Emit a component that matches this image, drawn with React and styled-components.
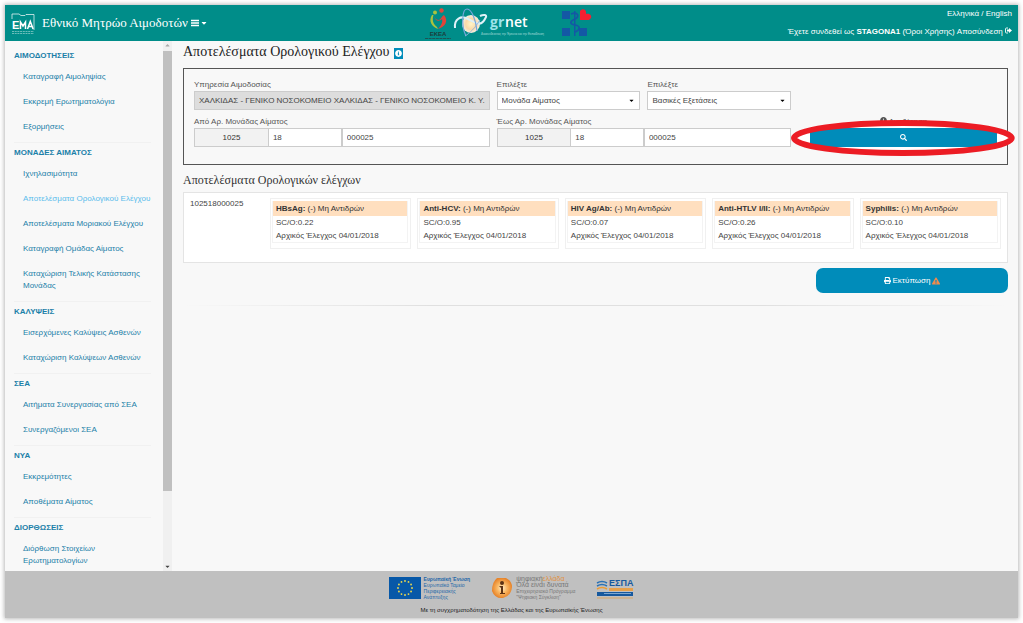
import React from "react";
import styled, { createGlobalStyle } from "styled-components";
import { FaCaretDown, FaSearch, FaPrint, FaExclamationTriangle, FaInfoCircle } from "react-icons/fa";

const serif = '"Liberation Serif", "Times New Roman", serif';
const teal = "#008d89";
const blue = "#008cba";

const Global = createGlobalStyle`
  * { box-sizing: border-box; }
  body {
    margin: 0;
    background: #fff;
    color: #444;
    font-family: "Liberation Sans", Arial, sans-serif;
    font-size: 8px;
    line-height: 12px;
  }
  a { color: inherit; text-decoration: none; }
  h1, h2, h3, p, ul { margin: 0; padding: 0; }
  ul { list-style: none; }
  input, select, button { font: inherit; color: inherit; min-width: 0; }
`;

const Page = styled.div`
  min-height: 100vh;
  padding: 5px;
  display: flex;
`;
const Shell = styled.div`
  flex: 1;
  min-width: 0;
  display: flex;
  flex-direction: column;
  background: #f8f8f8;
  box-shadow: 0 0 4px 1px #bbb;
`;

/* Header */
const Header = styled.header`
  display: grid;
  grid-template-columns: 1fr auto 1fr;
  align-items: center;
  height: 36px;
  padding: 0 6px;
  background: ${teal};
  color: #fff;
`;
const Brand = styled.div`
  display: flex;
  align-items: center;
  gap: 7px;
`;
const BrandTitle = styled.a`
  font: 13px/18px ${serif};
`;
const MenuButton = styled.button`
  display: flex;
  align-items: center;
  gap: 1px;
  margin-left: -4px;
  padding: 0;
  border: 0;
  background: none;
`;
const Logos = styled.div`
  display: flex;
  align-items: center;
  margin-right: 6px;
`;
const Account = styled.div`
  display: flex;
  flex-direction: column;
  align-items: flex-end;
  gap: 6px;
  white-space: nowrap;
`;

/* Body */
const Body = styled.div`
  flex: 1;
  display: grid;
  grid-template-columns: 158px 9px minmax(0, 1fr);
`;
const Nav = styled.nav`
  padding: 9px 12px 0 9px;
  color: #1b80a8;
`;
const Group = styled.section`
  & + & {
    border-top: 1px solid #f1f1f1;
    margin-top: 3px;
    padding-top: 4px;
  }
  &:last-child li { padding-bottom: 3px; }
`;
const GroupTitle = styled.h3`
  font-size: 8px;
  line-height: 12px;
  padding-bottom: 2px;
`;
const NavItem = styled.li`
  padding: 7px 0 6px 9px;
  color: ${(p) => (p.$active ? "#5bbdec" : "inherit")};
`;
const ScrollTrack = styled.div`
  display: flex;
  flex-direction: column;
  align-items: center;
  background: #f0f0f0;
`;
const ScrollArrow = styled.span`
  display: flex;
  align-items: center;
  justify-content: center;
  height: 10px;
  color: ${(p) => (p.$dim ? "#aaa" : "#444")};
  transform: ${(p) => (p.$up ? "rotate(180deg)" : "none")};
`;
const ScrollThumb = styled.span`
  flex: 44;
  width: 100%;
  background: #c0c0c0;
`;
const ScrollRest = styled.span`
  flex: 7;
`;
const Main = styled.main`
  padding: 1px 10px 20px 11px;
`;
const PageTitle = styled.h1`
  display: flex;
  align-items: center;
  gap: 5px;
  font: 14px/19px ${serif};
  color: #222;
`;
const InfoBadge = styled.span`
  display: flex;
  align-items: center;
  justify-content: center;
  width: 9px;
  height: 11px;
  margin-top: 3px;
  background: ${blue};
  color: #fff;
`;
const SearchForm = styled.form`
  display: grid;
  grid-template-columns: 296fr 144fr 144fr 200fr;
  gap: 6px 7px;
  margin-top: 7px;
  padding: 10px 9px 17px 10px;
  border: 1px solid #555;
`;
const Field = styled.div`
  display: flex;
  flex-direction: column;
  min-width: 0;
  grid-column: span ${(p) => p.$span || 1};
`;
const Label = styled.label`
  line-height: 12px;
  color: #555;
`;
const control = `
  width: 100%;
  height: 19px;
  border: 1px solid #ccc;
  border-radius: 0;
  outline: 0;
`;
const TextInput = styled.input`
  ${control}
  padding: 0 4px;
  background: ${(p) => (p.disabled ? "#ddd" : "#fff")};
  color: #444;
`;
const SelectBox = styled.div`
  display: grid;
  align-items: center;
  & > * { grid-area: 1 / 1; }
  & > svg {
    justify-self: end;
    margin-right: 5px;
    color: #000;
    pointer-events: none;
  }
`;
const Select = styled.select`
  ${control}
  appearance: none;
  padding: 0 4px;
  background: #fff;
`;
const UnitRow = styled.div`
  display: grid;
  grid-template-columns: 1fr 1fr 2fr;
`;
const Prefix = styled.span`
  display: flex;
  align-items: center;
  justify-content: center;
  border: 1px solid #ccc;
  border-right: 0;
  background: #f2f2f2;
  color: #333;
`;
const SearchField = styled(Field)`
  position: relative;
  isolation: isolate;
  padding: 0 1px 0 12px;
  text-align: center;
`;
const SearchButton = styled.button`
  display: flex;
  align-items: center;
  justify-content: center;
  height: 19px;
  border: 0;
  background: ${blue};
  color: #fff;
`;
const Highlight = styled.svg`
  position: absolute;
  left: -8px;
  top: 0;
  width: calc(100% + 26px);
  height: 40px;
  overflow: visible;
  pointer-events: none;
  z-index: ${(p) => (p.$behind ? -1 : 1)};
`;

/* Results */
const SectionTitle = styled.h2`
  margin-top: 6px;
  font: 12px/18px ${serif};
  color: #333;
`;
const Results = styled.section`
  display: grid;
  grid-template-columns: 74px minmax(0, 1fr);
  gap: 6px;
  margin-top: 3px;
  min-height: 71px;
  padding: 5px 6px;
  border: 1px solid #e4e4e4;
  background: #fff;
`;
const Tests = styled.div`
  display: grid;
  grid-template-columns: repeat(5, minmax(0, 1fr));
  gap: 6px;
  align-items: start;
`;
const Test = styled.article`
  padding: 2px 2px 5px 1px;
  border: 1px solid #f0f0f0;
`;
const TestBody = styled.div`
  border: 1px solid #f3f3f3;
  border-top: 0;
  white-space: nowrap;
  & > p { padding: 0 3px; line-height: 13px; }
`;
const TestHead = styled.h3`
  padding: 0 3px;
  background: #ffdfbf;
  font-size: 8px;
  line-height: 15px;
  font-weight: 400;
  color: #333;
`;
const Actions = styled.div`
  display: flex;
  justify-content: flex-end;
  margin-top: 5px;
`;
const PrintButton = styled.button`
  display: flex;
  align-items: center;
  justify-content: center;
  gap: 2px;
  width: 23%;
  min-width: 192px;
  height: 25px;
  border: 0;
  border-radius: 7px;
  background: ${blue};
  color: #fff;
`;
const Divider = styled.hr`
  height: 1px;
  margin: 12px 0 0;
  border: 0;
  background: linear-gradient(90deg, transparent, #e0e0e0 30%, #e0e0e0 70%, transparent);
`;

/* Footer */
const Footer = styled.footer`
  display: flex;
  flex-direction: column;
  align-items: center;
  gap: 4px;
  padding: 5px 0 2px;
  background: #c0c0c0;
  color: #222;
  font-size: 6px;
`;
const Sponsors = styled.div`
  display: flex;
  align-items: center;
  gap: 21px;
`;
const Sponsor = styled.div`
  display: flex;
  align-items: center;
  gap: 3px;
`;
const SponsorText = styled.div`
  font-size: 5px;
  line-height: 6px;
  color: ${(p) => (p.$muted ? "#777" : "#2467a8")};
  white-space: nowrap;
`;
const SponsorLead = styled.div`
  font-size: 7px;
`;
const Accent = styled.span`
  color: #e0913f;
`;

const EmaLogo = () => (
  <svg width="24" height="24" viewBox="0 0 24 24" aria-label="EMA">
    <path d="M1 8V3h7l2 1.500h4l1-1h8V19" fill="none" stroke="#fff" strokeWidth="0.7" />
    <text x="1" y="18" fontSize="11" fontWeight="700" fill="#fff">E</text>
    <path d="M9.500 18v-7l2.500 4 2.500-4v7M16.500 18l2.800-7.500 2.800 7.500M17.500 15.500h4" fill="none" stroke="#fff" strokeWidth="1.500" />
    <path d="M1 20.500H23M1 22.500H23" stroke="#9ad2d0" strokeWidth="0.7" strokeDasharray="2 .7" />
  </svg>
);

const MenuIcon = () => (
  <svg width="8" height="8" viewBox="0 0 8 8" aria-hidden="true">
    <path d="M0 1.500h8M0 4h8M0 6.500h8" stroke="#fff" strokeWidth="1.400" />
  </svg>
);

const EkeaLogo = () => (
  <svg width="28" height="34" viewBox="0 0 28 34" aria-label="ΕΚΕΑ">
    <circle cx="10" cy="6.500" r="2" fill="#a9c23f" />
    <circle cx="16.500" cy="4.500" r="2.200" fill="#e0483c" />
    <path d="M7 9c-4 6 0 12 6 14l-1-2C8 18 7 14 8.500 9z" fill="#a9c23f" />
    <path d="M9 10c1 3 3 4 5 4 2-1 3-4 5-5 5 6 1 12-6 14 3-3 5-7 4-10-3 3-7 2-8-3z" fill="#df4439" />
    <text x="13" y="29.500" fontSize="6" fontWeight="700" textAnchor="middle" fill="#1d3c3c">ΕΚΕΑ</text>
    <path d="M0 32.500H26" stroke="#1d5454" strokeWidth="1" strokeDasharray="3 .6" />
  </svg>
);

const GrnetLogo = () => (
  <svg width="102" height="34" viewBox="0 0 102 34" aria-label="grnet">
    <defs>
      <radialGradient id="sun">
        <stop offset="0" stopColor="#fff6c9" />
        <stop offset="0.6" stopColor="#fbd9a8" />
        <stop offset="1" stopColor="#f3efe4" />
      </radialGradient>
    </defs>
    <circle cx="18" cy="18" r="9" fill="url(#sun)" />
    <path d="M2 22C1 13 8 9 15 13c8 4 13 9 18-2 1-2-2-3-6-1" fill="none" stroke="#dff1f7" strokeWidth="2" />
    <path d="M13 30C8 20 9 3 14 3c5 0 9 12 10 22" fill="none" stroke="#77a6dc" strokeWidth="1.200" />
    <path d="M12 30c5-3 10-8 15-16" fill="none" stroke="#8fb4dd" strokeWidth="0.900" />
    <text x="37" y="21" fontSize="14" fontWeight="700" fill="#9be3ea" fontFamily="Open Sans">gr</text>
    <text x="52" y="21" fontSize="14" fontWeight="600" fill="#fff" fontFamily="Open Sans">net</text>
    <text x="28" y="29" fontSize="3" fill="#a5dcd8">Διασυνδέοντας την Έρευνα και την Εκπαίδευση</text>
  </svg>
);

const HealthLogo = () => (
  <svg width="38" height="34" viewBox="0 0 38 34" aria-label="Υπουργείο Υγείας">
    <g fill="#1458a5">
      <rect x="7" y="5" width="8" height="8" />
      <rect x="7" y="22" width="8" height="8" />
      <rect x="24" y="22" width="8" height="8" />
      <path d="M19 5h1.500v25H19z" />
    </g>
    <path d="M16 8c7-3 9 3 4 5s-6 5 0 6 5 5 0 7" fill="none" stroke="#1458a5" strokeWidth="1.700" />
    <path d="M25 14V5c2-3 6-2 6 1v2c4-1 6 2 5 4l-2 2z" fill="#f51f31" />
  </svg>
);

const LogoutIcon = () => (
  <svg width="7" height="7" viewBox="0 0 14 14" aria-hidden="true">
    <path d="M6 2H3Q1 2 1 4v6q0 2 2 2h3" fill="none" stroke="#fff" strokeWidth="1.800" />
    <path d="M4 5h4V2l6 5-6 5V9H4z" fill="#fff" />
  </svg>
);

const EuFlag = () => (
  <svg width="32" height="22" viewBox="0 0 32 22" aria-label="EU">
    <rect width="32" height="22" fill="#0758a8" />
    {Array.from({ length: 12 }, (_, i) => {
      const a = (i * Math.PI) / 6;
      return <circle key={i} cx={16 + 7 * Math.cos(a)} cy={11 + 7 * Math.sin(a)} r="0.9" fill="#f2dc4a" />;
    })}
  </svg>
);

const DigitalLogo = () => (
  <svg width="22" height="22" viewBox="0 0 22 22" aria-hidden="true">
    <defs>
      <radialGradient id="orb">
        <stop offset="0" stopColor="#fff0cf" />
        <stop offset="0.5" stopColor="#f9b763" />
        <stop offset="1" stopColor="#e7842a" />
      </radialGradient>
    </defs>
    <path d="M6 1h9q6 3 6 9-1 9-9 11-8 1-11-7Q1 5 6 1z" fill="url(#orb)" />
    <circle cx="11" cy="6" r="2" fill="#5c3316" />
    <path d="M8 9h4v7h2v1H9v-1h1v-5z" fill="#5c3316" />
  </svg>
);

const EspaLogo = () => (
  <svg width="38" height="22" viewBox="0 0 38 22" aria-label="ΕΣΠΑ">
    <path d="M1 6q5-3 10 0M1 9q5-3 10 0" fill="none" stroke="#2b71b5" strokeWidth="1.500" />
    <path d="M1 12q5-3 10 0" fill="none" stroke="#ed9b32" strokeWidth="1.500" />
    <text x="13" y="9" fontSize="9" fontWeight="700" fill="#17599e">ΕΣΠΑ</text>
    <rect x="13" y="11" width="24" height="3" fill="#e6a04b" />
    <rect x="1" y="15" width="36" height="4" fill="#17599e" />
    <rect x="8" y="16" width="27" height="1" fill="#7da6cf" />
    <path d="M1 21H37" stroke="#d6a566" strokeWidth="1" />
  </svg>
);

const menu = [
  ["ΑΙΜΟΔΟΤΗΣΕΙΣ", ["Καταγραφή Αιμοληψίας", "Εκκρεμή Ερωτηματολόγια", "Εξορμήσεις"]],
  ["ΜΟΝΑΔΕΣ ΑΙΜΑΤΟΣ", [
    "Ιχνηλασιμότητα",
    "Αποτελέσματα Ορολογικού Ελέγχου",
    "Αποτελέσματα Μοριακού Ελέγχου",
    "Καταγραφή Ομάδας Αίματος",
    "Καταχώριση Τελικής Κατάστασης Μονάδας",
  ]],
  ["ΚΑΛΥΨΕΙΣ", ["Εισερχόμενες Καλύψεις Ασθενών", "Καταχώριση Καλύψεων Ασθενών"]],
  ["ΣΕΑ", ["Αιτήματα Συνεργασίας από ΣΕΑ", "Συνεργαζόμενοι ΣΕΑ"]],
  ["ΝΥΑ", ["Εκκρεμότητες", "Αποθέματα Αίματος"]],
  ["ΔΙΟΡΘΩΣΕΙΣ", ["Διόρθωση Στοιχείων Ερωτηματολογίων"]],
];
const ACTIVE = "Αποτελέσματα Ορολογικού Ελέγχου";

const tests = [
  ["HBsAg", "0.22"],
  ["Anti-HCV", "0.95"],
  ["HIV Ag/Ab", "0.07"],
  ["Anti-HTLV I/II", "0.26"],
  ["Syphilis", "0.10"],
];

const UnitNumber = ({ id, label, span }) => (
  <Field $span={span}>
    <Label htmlFor={id}>{label}</Label>
    <UnitRow>
      <Prefix>1025</Prefix>
      <TextInput id={id} defaultValue="18" />
      <TextInput aria-label={label} defaultValue="000025" />
    </UnitRow>
  </Field>
);

const SelectField = ({ id, value }) => (
  <Field>
    <Label htmlFor={id}>Επιλέξτε</Label>
    <SelectBox>
      <Select id={id} defaultValue={value}>
        <option>{value}</option>
      </Select>
      <FaCaretDown size={7} />
    </SelectBox>
  </Field>
);

export default function App() {
  return (
    <Page>
      <Global />
      <Shell>
        <Header>
          <Brand>
            <EmaLogo />
            <BrandTitle href="#">Εθνικό Μητρώο Αιμοδοτών</BrandTitle>
            <MenuButton type="button" aria-label="Μενού">
              <MenuIcon />
              <FaCaretDown size={8} />
            </MenuButton>
          </Brand>
          <Logos>
            <EkeaLogo />
            <GrnetLogo />
            <HealthLogo />
          </Logos>
          <Account>
            <div><a href="#">Ελληνικά</a> / <a href="#">English</a></div>
            <div>
              Έχετε συνδεθεί ως <b>STAGONA1</b> <a href="#">(Όροι Χρήσης)</a>{" "}
              <a href="#">Αποσύνδεση <LogoutIcon /></a>
            </div>
          </Account>
        </Header>

        <Body>
          <Nav>
            {menu.map(([title, items]) => (
              <Group key={title}>
                <GroupTitle>{title}</GroupTitle>
                <ul>
                  {items.map((item) => (
                    <NavItem key={item} $active={item === ACTIVE}>
                      <a href="#">{item}</a>
                    </NavItem>
                  ))}
                </ul>
              </Group>
            ))}
          </Nav>
          <ScrollTrack aria-hidden="true">
            <ScrollArrow $up $dim><FaCaretDown size={7} /></ScrollArrow>
            <ScrollThumb />
            <ScrollRest />
            <ScrollArrow><FaCaretDown size={7} /></ScrollArrow>
          </ScrollTrack>

          <Main>
            <PageTitle>
              Αποτελέσματα Ορολογικού Ελέγχου
              <InfoBadge><FaInfoCircle size={7} /></InfoBadge>
            </PageTitle>
            <SearchForm onSubmit={(e) => e.preventDefault()}>
              <Field>
                <Label htmlFor="service">Υπηρεσία Αιμοδοσίας</Label>
                <TextInput
                  id="service"
                  disabled
                  defaultValue="ΧΑΛΚΙΔΑΣ - ΓΕΝΙΚΟ ΝΟΣΟΚΟΜΕΙΟ ΧΑΛΚΙΔΑΣ - ΓΕΝΙΚΟ ΝΟΣΟΚΟΜΕΙΟ Κ. Υ. ΚΑΡ"
                />
              </Field>
              <SelectField id="unit" value="Μονάδα Αίματος" />
              <SelectField id="exams" value="Βασικές Εξετάσεις" />
              <span />
              <UnitNumber id="from" label="Από Αρ. Μονάδας Αίματος" />
              <UnitNumber id="to" label="Έως Αρ. Μονάδας Αίματος" span={2} />
              <SearchField>
                <Highlight $behind viewBox="0 0 226 40" preserveAspectRatio="none">
                  <ellipse cx="113" cy="22" rx="109" ry="15" fill="#fff" />
                </Highlight>
                <Label htmlFor="search"><FaInfoCircle size={7} /> Αναζήτηση</Label>
                <SearchButton id="search" type="submit" aria-label="Αναζήτηση">
                  <FaSearch size={7} />
                </SearchButton>
                <Highlight viewBox="0 0 226 40" preserveAspectRatio="none">
                  <ellipse cx="113" cy="22" rx="109" ry="15" fill="none" stroke="#ec1c24" strokeWidth="6" />
                </Highlight>
              </SearchField>
            </SearchForm>

            <SectionTitle>Αποτελέσματα Ορολογικών ελέγχων</SectionTitle>
            <Results>
              <span>102518000025</span>
              <Tests>
                {tests.map(([name, value]) => (
                  <Test key={name}>
                    <TestBody>
                      <TestHead><b>{name}:</b> (-) Μη Αντιδρών</TestHead>
                      <p>SC/O:{value}</p>
                      <p>Αρχικός Έλεγχος 04/01/2018</p>
                    </TestBody>
                  </Test>
                ))}
              </Tests>
            </Results>
            <Actions>
              <PrintButton type="button">
                <FaPrint size={7} /> Εκτύπωση <FaExclamationTriangle size={8} color="#f08a4b" />
              </PrintButton>
            </Actions>
            <Divider />
          </Main>
        </Body>

        <Footer>
          <Sponsors>
            <Sponsor>
              <EuFlag />
              <SponsorText>
                <b>Ευρωπαϊκή Ένωση</b><br />Ευρωπαϊκό Ταμείο<br />Περιφερειακής<br />Ανάπτυξης
              </SponsorText>
            </Sponsor>
            <Sponsor>
              <DigitalLogo />
              <SponsorText $muted>
                <SponsorLead>ψηφιακή<Accent>ελλάδα</Accent></SponsorLead>
                <SponsorLead>Όλα είναι δυνατά</SponsorLead>
                Επιχειρησιακό Πρόγραμμα<br />"Ψηφιακή Σύγκλιση"
              </SponsorText>
            </Sponsor>
            <EspaLogo />
          </Sponsors>
          <p>Με τη συγχρηματοδότηση της Ελλάδας και της Ευρωπαϊκής Ένωσης</p>
        </Footer>
      </Shell>
    </Page>
  );
}
